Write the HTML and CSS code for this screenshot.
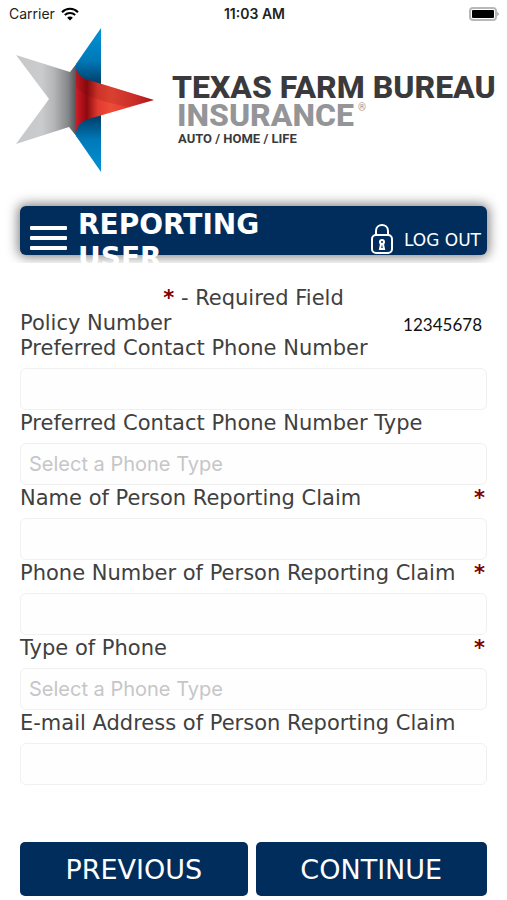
FILE: index.html
```
<!DOCTYPE html>
<html lang="en">
<head>
    <meta charset="utf-8">
    <meta name="viewport" content="width=device-width, initial-scale=1.0">
    <title>Reporting User</title>
    <link rel="stylesheet" href="styles.css">
</head>
<body>
    <div class="status-bar">
        <div class="carrier">
            Carrier
            <svg class="wifi" viewBox="0 0 18 14" aria-hidden="true">
                <path d="M1 5.2 C5.5 0.6 12.5 0.6 17 5.2" />
                <path d="M3.8 8 C6.7 5.2 11.3 5.2 14.2 8" />
                <path class="dot" d="M9 13.6 L6.1 10.7 C7.7 9.2 10.3 9.2 11.9 10.7 Z" />
            </svg>
        </div>
        <div class="time">11:03 AM</div>
        <svg class="battery" viewBox="0 0 31 14" aria-hidden="true">
            <rect x="1" y="1" width="26" height="12" rx="3" fill="#fff" stroke="#b8b8b8" stroke-width="2" />
            <rect x="3" y="3" width="22" height="8" rx="1" fill="#000" />
            <path d="M28 4.5 L30.5 7 L28 9.5 Z" fill="#b8b8b8" />
        </svg>
    </div>

    <div class="brand">
        <svg class="star" viewBox="0 0 138 144" aria-hidden="true">
            <defs>
                <linearGradient id="silver" x1="0" x2="1" y1="0" y2="0">
                    <stop offset="0" stop-color="#c6c8ca" />
                    <stop offset="0.42" stop-color="#c9cbcd" />
                    <stop offset="0.62" stop-color="#b4b6b8" />
                    <stop offset="0.85" stop-color="#85878a" />
                    <stop offset="1" stop-color="#4d4e50" />
                </linearGradient>
                <linearGradient id="blue-top" x1="0" x2="0" y1="0" y2="1">
                    <stop offset="0" stop-color="#0093d6" />
                    <stop offset="0.45" stop-color="#0079b8" />
                    <stop offset="0.75" stop-color="#00426e" />
                </linearGradient>
                <linearGradient id="blue-bottom" x1="0" x2="0" y1="1" y2="0">
                    <stop offset="0" stop-color="#0093d6" />
                    <stop offset="0.45" stop-color="#0079b8" />
                    <stop offset="0.75" stop-color="#00426e" />
                </linearGradient>
                <linearGradient id="red" x1="0" x2="1" y1="0" y2="0">
                    <stop offset="0" stop-color="#c8202a" />
                    <stop offset="0.06" stop-color="#b5121b" />
                    <stop offset="0.14" stop-color="#8c0a10" />
                    <stop offset="0.28" stop-color="#e03a2e" />
                    <stop offset="0.45" stop-color="#ee4c38" />
                    <stop offset="0.75" stop-color="#de3530" />
                    <stop offset="1" stop-color="#b8151f" />
                </linearGradient>
            </defs>
            <path fill="url(#silver)" d="M0 27 L54 44 L61 35 V109 L53 99 L0 116 L33 71 Z" />
            <path fill="url(#blue-top)" d="M85 0 V72 H60 V36 Z" />
            <path fill="url(#blue-bottom)" d="M85 144 V72 H60 V108 Z" />
            <path fill="url(#red)" d="M60 41 C62 48 68 52 76 53 L138 72 L76 90 C67 92 62 96 60 104 Z" />
            <path fill="#5c0508" fill-opacity="0.15" d="M60 41 C62 48 68 52 76 53 L138 72 L112 79 C88 74 66 68 60 58 Z" />
        </svg>
        <div class="brand-text">
            <div class="brand-name">TEXAS FARM BUREAU</div>
            <div class="brand-sub">INSURANCE<span class="reg">®</span></div>
            <div class="brand-lines">AUTO / HOME / LIFE</div>
        </div>
    </div>

    <div class="header">
        <div class="header-bar">
            <button class="menu-btn" type="button" aria-label="Menu">
                <span></span>
                <span></span>
                <span></span>
            </button>
            <h1 class="title">REPORTING USER</h1>
            <a class="logout" href="#">
                <svg class="lock" viewBox="0 0 24 32" aria-hidden="true">
                    <path d="M6 11 V7 C6 -1 18 -1 18 7 V11" />
                    <rect x="2" y="11" width="20" height="18" rx="4" />
                    <circle cx="12" cy="18" r="2" />
                    <path d="M11 20 L10 25 H14 L13 20" />
                </svg>
                LOG OUT
            </a>
        </div>
    </div>

    <form class="content">
        <p class="required-note"><span class="required">*</span> - Required Field</p>

        <div class="policy">
            <span>Policy Number</span>
            <span class="policy-number">12345678</span>
        </div>

        <div class="field">
            <label for="contact-phone">Preferred Contact Phone Number</label>
            <input type="tel" id="contact-phone">
        </div>
        <div class="field">
            <label for="contact-type">Preferred Contact Phone Number Type</label>
            <select id="contact-type">
                <option value="">Select a Phone Type</option>
            </select>
        </div>
        <div class="field">
            <label for="person-name">Name of Person Reporting Claim <span class="required">*</span></label>
            <input type="text" id="person-name">
        </div>
        <div class="field">
            <label for="person-phone">Phone Number of Person Reporting Claim <span class="required">*</span></label>
            <input type="tel" id="person-phone">
        </div>
        <div class="field">
            <label for="phone-type">Type of Phone <span class="required">*</span></label>
            <select id="phone-type">
                <option value="">Select a Phone Type</option>
            </select>
        </div>
        <div class="field">
            <label for="person-email">E-mail Address of Person Reporting Claim</label>
            <input type="email" id="person-email">
        </div>

        <div class="actions">
            <button type="button">PREVIOUS</button>
            <button type="button">CONTINUE</button>
        </div>
    </form>
</body>
</html>
```
FILE: styles.css
```
* {
    box-sizing: border-box;
}

body {
    margin: 0;
    min-height: 100vh;
    display: flex;
    flex-direction: column;
    background: #fff;
    color: #404040;
    font-family: Verdana, 'DejaVu Sans', sans-serif;
    font-size: 21px;
    line-height: 26px;
}

/* Status bar */
.status-bar {
    display: grid;
    grid-template-columns: 1fr auto 1fr;
    align-items: center;
    height: 28px;
    padding: 0 7px 0 9px;
    font-family: Inter, sans-serif;
    font-size: 14px;
    color: #222;
}

.carrier {
    display: flex;
    align-items: center;
    gap: 6px;
}

.wifi {
    width: 18px;
    height: 14px;
    fill: none;
    stroke: #000;
    stroke-width: 2;
}

.wifi .dot {
    fill: #000;
    stroke: none;
}

.time {
    font-weight: 600;
}

.battery {
    width: 31px;
    height: 14px;
    justify-self: end;
}

/* Logo */
.brand {
    display: flex;
    align-items: center;
    gap: 18px;
    padding: 0 10px 0 16px;
}

.star {
    width: 138px;
    height: 144px;
    flex-shrink: 0;
}

.brand-text {
    padding-top: 22px;
    font-family: Roboto, sans-serif;
    white-space: nowrap;
    color: #3a3a3c;
}

.brand-name {
    font-size: 32px;
    line-height: 28px;
    font-weight: 800;
}

.brand-sub {
    display: flex;
    padding-left: 5px;
    font-size: 32px;
    line-height: 28px;
    font-weight: 800;
    color: #939598;
}

.reg {
    padding-left: 4px;
    font-size: 10px;
    line-height: 14px;
    font-weight: 400;
}

.brand-lines {
    padding-left: 6px;
    font-size: 13px;
    line-height: 20px;
    font-weight: 700;
}

/* Title bar, the second title line runs over its edge */
.header {
    height: 79px;
    margin-top: 12px;
    padding: 22px 20px 0;
    overflow: hidden;
}

.header-bar {
    display: flex;
    align-items: flex-start;
    height: 49px;
    padding: 0 6px 0 10px;
    background: #002d5c;
    border-radius: 6px;
    box-shadow: 0 0 12px 2px rgba(0, 0, 0, 0.5);
    color: #fff;
}

.menu-btn {
    display: flex;
    flex-direction: column;
    gap: 6px;
    width: 37px;
    margin-top: 20px;
    padding: 0;
    border: none;
    background: none;
    cursor: pointer;
}

.menu-btn span {
    width: 100%;
    height: 4px;
    border-radius: 1px;
    background: #fff;
}

.title {
    flex: 1;
    margin: 0;
    padding: 2px 32px 0 11px;
    font-size: 28px;
    line-height: 33px;
    font-weight: bold;
}

.logout {
    display: flex;
    align-items: center;
    gap: 10px;
    padding-top: 18px;
    font-size: 17px;
    line-height: 32px;
    color: #fff;
    text-decoration: none;
}

.lock {
    width: 24px;
    height: 32px;
    fill: none;
    stroke: #fff;
    stroke-width: 2;
}

/* Form */
.content {
    flex: 1;
    display: flex;
    flex-direction: column;
    padding: 22px 20px 4px;
}

.required-note {
    margin: 0;
    text-align: center;
}

.required {
    font-weight: bold;
    color: #800000;
}

.policy {
    display: flex;
    align-items: flex-end;
    justify-content: space-between;
    padding-right: 5px;
    line-height: 24px;
}

.policy-number {
    font-family: Lato, sans-serif;
    font-size: 17px;
    line-height: 20px;
    color: #111;
}

.field label {
    display: flex;
    justify-content: space-between;
    margin-bottom: 7px;
    padding-right: 2px;
    white-space: nowrap;
}

.field input,
.field select {
    display: block;
    width: 100%;
    height: 42px;
    padding: 0 8px;
    border: 1px solid #f0f0f0;
    border-radius: 6px;
    background: #fefefe;
    font-family: Inter, sans-serif;
    font-size: 20px;
    color: #404040;
    appearance: none;
}

.field select {
    color: #c6c6c8;
}

.actions {
    display: grid;
    grid-template-columns: 228fr 232fr;
    gap: 8px;
    margin-top: auto;
}

.actions button {
    height: 54px;
    padding: 0;
    border: none;
    border-radius: 5px;
    background: #002d5c;
    color: #fff;
    font-family: inherit;
    font-size: 27px;
    cursor: pointer;
}
```
